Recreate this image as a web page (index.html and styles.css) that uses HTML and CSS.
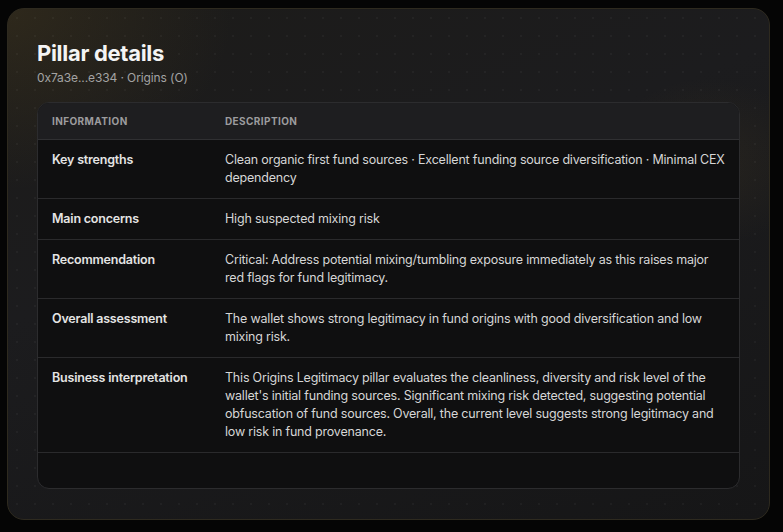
FILE: index.html
```html
<!DOCTYPE html>
<html lang="en">
<head>
  <meta charset="UTF-8" />
  <meta name="viewport" content="width=device-width, initial-scale=1.0"/>
  <title>Pillar details</title>
  <link rel="stylesheet" href="styles.css">
</head>
<body>

<section class="panel">
  <h1>Pillar details</h1>
  <p class="subtitle">0x7a3e...e334 · Origins (O)</p>

  <div class="table-wrap">
    <table class="details">
      <thead>
        <tr>
          <th>Information</th>
          <th>Description</th>
        </tr>
      </thead>
      <tbody>
        <tr>
          <td class="key">Key strengths</td>
          <td>Clean organic first fund sources · Excellent funding source diversification · Minimal CEX dependency</td>
        </tr>
        <tr>
          <td class="key">Main concerns</td>
          <td>High suspected mixing risk</td>
        </tr>
        <tr>
          <td class="key">Recommendation</td>
          <td>Critical: Address potential mixing/tumbling exposure immediately as this raises major red flags for fund legitimacy.</td>
        </tr>
        <tr>
          <td class="key">Overall assessment</td>
          <td>The wallet shows strong legitimacy in fund origins with good diversification and low mixing risk.</td>
        </tr>
        <tr>
          <td class="key">Business interpretation</td>
          <td>This Origins Legitimacy pillar evaluates the cleanliness, diversity and risk level of the wallet's initial funding sources. Significant mixing risk detected, suggesting potential obfuscation of fund sources. Overall, the current level suggests strong legitimacy and low risk in fund provenance.</td>
        </tr>
      </tbody>
    </table>
  </div>
</section>

</body>
</html>
```

FILE: styles.css
```css
* { box-sizing: border-box; }

body {
  margin: 0;
  padding: 8px 13px 12px 7px;
  font-family: Inter, 'Noto Sans', sans-serif;
  background-color: #050505;
  color: #e6e6e6;
}

.panel {
  height: 512px;
  padding: 30px 29px 29px 29px;
  border: 1px solid #2e2a1f;
  border-radius: 17px;
  background:
    radial-gradient(circle, rgba(255,255,255,0.035) 0.8px, transparent 1.3px) 0 0 / 18px 18px,
    radial-gradient(ellipse 150px 120px at 92% 30%, rgba(120,95,40,0.12), transparent 70%),
    radial-gradient(ellipse 300px 240px at 0% 0%, rgba(100,80,35,0.25), transparent 75%),
    linear-gradient(160deg, #1c1b19 0%, #1c1c1e 40%, #161617 100%);
}

h1 {
  margin: 0;
  font-size: 22px;
  font-weight: 700;
  letter-spacing: -0.3px;
  line-height: 28px;
  color: #f4f4f4;
}

.subtitle {
  margin: 3px 0 0;
  font-size: 12px;
  letter-spacing: -0.1px;
  line-height: 16px;
  color: #a3a3a3;
}

.table-wrap {
  margin-top: 16px;
  height: 387px;
  border: 1px solid #2c2c2e;
  border-radius: 12px;
  background: #0f0f10;
  overflow: hidden;
}

.details {
  width: 100%;
  border-collapse: collapse;
  font-size: 12.5px;
  letter-spacing: -0.2px;
  line-height: 18px;
}

.details th {
  padding: 11px 14px 11px 14px;
  background: #1e1e20;
  border-bottom: 1px solid #303032;
  text-align: left;
  font-size: 10px;
  line-height: 14px;
  font-weight: 700;
  letter-spacing: 0.4px;
  text-transform: uppercase;
  color: #9c9c9e;
}

.details td {
  padding: 11px 14px 11px 14px;
  border-bottom: 1px solid #2a2a2c;
  vertical-align: top;
  color: #d6d6d6;
}

.details th:first-child,
.details td.key {
  width: 173px;
}

.details td.key {
  font-weight: 600;
  color: #e4e4e4;
  white-space: nowrap;
}
```
